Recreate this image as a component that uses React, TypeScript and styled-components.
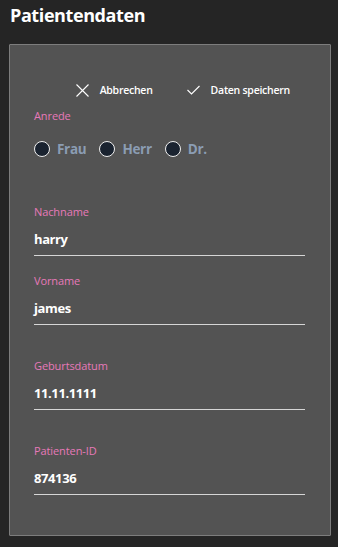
import styled, { createGlobalStyle } from 'styled-components';

export const Colors = {
    Page: '#252525',
    Panel: '#535353',
    PanelBorder: '#7d7d7d',
    Pink: '#e779b9',
    Text: '#ffffff',
    RadioText: '#8b9db3',
    RadioFill: '#1a2330',
    Line: '#d6d6d6',
}

const GlobalStyle = createGlobalStyle`
    body {
        margin: 0;
        background: ${Colors.Page};
        font-family: "Open Sans", "Noto Sans", sans-serif;
        color: ${Colors.Text};
    }
`;

const Page = styled.div`
    width: 338px;
    height: 547px;
    display: flex;
    flex-direction: column;
    box-sizing: border-box;
    padding: 0 7px 11px 9px;
`;

const Title = styled.h1`
    margin: 0;
    padding: 1px 0 0 1px;
    height: 43px;
    font-size: 18px;
    font-weight: 700;
    letter-spacing: -0.4px;
    line-height: 28px;
`;

const Panel = styled.div`
    flex: 1;
    background: ${Colors.Panel};
    border: 1px solid ${Colors.PanelBorder};
    border-radius: 1px;
    padding: 36px 25px 0 24px;
    display: flex;
    flex-direction: column;
`;

const Toolbar = styled.div`
    display: flex;
    justify-content: flex-end;
    gap: 34px;
    padding-right: 15px;
    height: 18px;
`;

const ToolButton = styled.button`
    display: flex;
    align-items: center;
    gap: 11px;
    background: none;
    border: none;
    padding: 0;
    color: ${Colors.Text};
    font-family: inherit;
    font-size: 10.5px;
    font-weight: 600;
    letter-spacing: -0.25px;
    cursor: pointer;
`;

const Label = styled.div`
    color: ${Colors.Pink};
    font-size: 11px;
    line-height: 14px;
    letter-spacing: -0.1px;
`;

const RadioGroup = styled.div`
    margin-top: 16px;
    display: flex;
    gap: 13px;
`;

const RadioOption = styled.label`
    display: flex;
    align-items: center;
    gap: 7px;
    color: ${Colors.RadioText};
    font-size: 13.5px;
    font-weight: 700;
    letter-spacing: -0.3px;
    line-height: 20px;
`;

const RadioDot = styled.span`
    width: 14px;
    height: 14px;
    border-radius: 50%;
    border: 1.5px solid #f0f0f0;
    background: ${Colors.RadioFill};
`;

const Field = styled.div<{ $gap: number }>`
    margin-top: ${p => p.$gap}px;
`;

const Value = styled.div`
    margin-top: 10px;
    padding-bottom: 6px;
    border-bottom: 1px solid ${Colors.Line};
    font-size: 13px;
    font-weight: 700;
    letter-spacing: -0.4px;
    line-height: 20px;
`;

const XIcon = () => (
    <svg width="13" height="13" viewBox="0 0 13 13" fill="none" stroke="#fff" strokeWidth="1.1">
        <path d="M0.5 0.5 L12.5 12.5 M12.5 0.5 L0.5 12.5" />
    </svg>
);

const CheckIcon = () => (
    <svg width="13" height="10" viewBox="0 0 13 10" fill="none" stroke="#fff" strokeWidth="1.1">
        <path d="M0.5 5 L4.5 9 L12.5 1" />
    </svg>
);

const fields = [
    { label: 'Nachname', value: 'harry', gap: 46 },
    { label: 'Vorname', value: 'james', gap: 18 },
    { label: 'Geburtsdatum', value: '11.11.1111', gap: 34 },
    { label: 'Patienten-ID', value: '874136', gap: 34 },
];

export default function App() {
    return (
        <>
            <GlobalStyle />
            <Page>
                <Title>Patientendaten</Title>
                <Panel>
                    <Toolbar>
                        <ToolButton><XIcon />Abbrechen</ToolButton>
                        <ToolButton><CheckIcon />Daten speichern</ToolButton>
                    </Toolbar>
                    <Field $gap={10}>
                        <Label>Anrede</Label>
                        <RadioGroup>
                            {['Frau', 'Herr', 'Dr.'].map(o => (
                                <RadioOption key={o}><RadioDot />{o}</RadioOption>
                            ))}
                        </RadioGroup>
                    </Field>
                    {fields.map(f => (
                        <Field key={f.label} $gap={f.gap}>
                            <Label>{f.label}</Label>
                            <Value>{f.value}</Value>
                        </Field>
                    ))}
                </Panel>
            </Page>
        </>
    );
}
